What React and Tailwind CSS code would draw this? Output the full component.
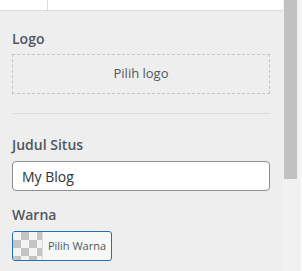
import React from 'react';

const Label = ({ children, className = '' }) => (
  <div className={`text-[14px] leading-[20px] font-semibold text-[#50575e] ${className}`}>{children}</div>
);

const App = () => {
  return (
    <div className="flex h-[271px] w-[302px] overflow-hidden bg-[#eeeeee] font-['Open_Sans','Noto_Sans',sans-serif]">
      <div className="flex w-[283px] flex-col">
        <div className="flex h-[11px] border-b border-[#dcdcde] bg-white">
          <div className="w-[48px] border-r border-[#dcdcde]" />
        </div>

        <div className="px-[12px]">
          <Label className="mt-[18px]">Logo</Label>
          <button className="mt-[5px] flex h-[40px] w-[258px] items-center justify-center border border-dashed border-[#c3c4c7] text-[13px] text-[#50575e]">
            Pilih logo
          </button>
          <div className="mt-[19px] h-px w-[258px] bg-[#dcdcde]" />

          <Label className="mt-[21px]">Judul Situs</Label>
          <input
            readOnly
            value="My Blog"
            className="mt-[6px] h-[30px] w-[258px] rounded-[4px] border border-[#8c8f94] bg-white px-[9px] text-[14px] text-[#2c3338] outline-none"
          />

          <Label className="mt-[14px]">Warna</Label>
          <button className="mt-[6px] flex h-[30px] w-[100px] overflow-hidden rounded-[3px] border border-[#2271b1] bg-[#f6f7f7]">
            <span className="h-full w-[30px] shrink-0 border-r border-[#dcdcde] bg-[repeating-conic-gradient(#c4c4c4_0_25%,#f3f3f3_0_50%)] bg-[length:16px_16px]" />
            <span className="flex flex-1 items-center justify-center text-[11px] text-[#50575e]">Pilih Warna</span>
          </button>
        </div>
      </div>

      <div className="relative w-[19px] bg-[#f1f1f1]">
        <div className="ml-[1px] h-[179px] w-[13px] bg-[#c1c1c1]" />
        <div className="absolute right-0 top-0 h-full w-[2px] bg-[#f7f7f7]" />
      </div>
    </div>
  );
};

export default App;
